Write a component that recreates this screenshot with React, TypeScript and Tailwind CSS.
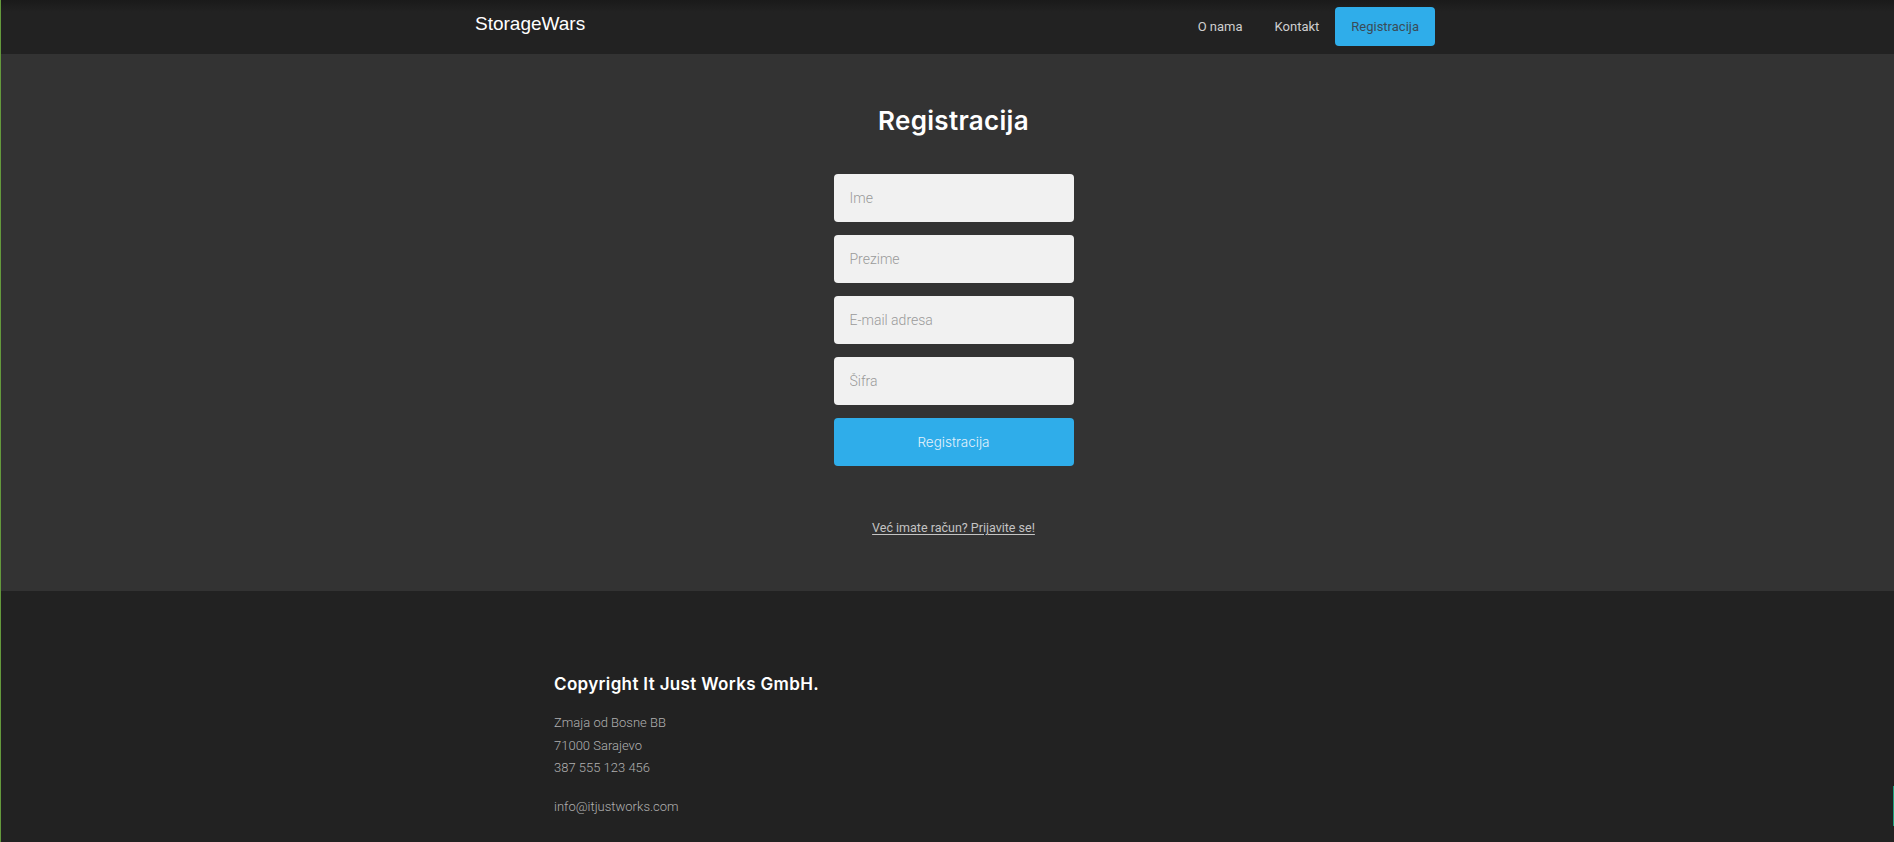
import React from "react";

const roboto = { fontFamily: "Roboto, 'Noto Sans', sans-serif" };

export default function App() {
  return (
    <div className="relative min-h-screen flex flex-col border-l border-[#64993c] bg-[#222222]">
      {/* Navbar */}
      <nav className="h-[54px] bg-[linear-gradient(to_bottom,#1a1a1a_0px,#222222_12px)]">
        <div className="w-[975px] mx-auto flex items-start justify-between">
          <a
            href="#"
            className="pl-[15px] pt-[14px] text-[19px] leading-[20px] text-white"
            style={{ fontFamily: "'Liberation Sans', Arial, sans-serif" }}
          >
            StorageWars
          </a>
          <ul className="flex items-center pt-[7px] text-[13px] font-[Roboto,sans-serif]">
            <li>
              <a href="#" className="block px-[16px] leading-[39px] text-[#cfcfcf]">
                O nama
              </a>
            </li>
            <li>
              <a href="#" className="block px-[16px] leading-[39px] text-[#cfcfcf]">
                Kontakt
              </a>
            </li>
            <li>
              <a
                href="#"
                className="block px-[16px] leading-[39px] rounded-[4px] bg-[#2fadea] text-[#3b4b57]"
              >
                Registracija
              </a>
            </li>
          </ul>
        </div>
      </nav>

      {/* Main */}
      <main className="bg-[#333333] pt-[51px] pb-[53px] pl-[12px] flex flex-col items-center">
        <h1 className="text-[26px] leading-[32px] font-semibold text-white tracking-[0.3px] font-[Inter,sans-serif]">
          Registracija
        </h1>
        <form className="mt-[37px] w-[240px] flex flex-col gap-[13px]" style={roboto}>
          {["Ime", "Prezime", "E-mail adresa", "Šifra"].map((p) => (
            <input
              key={p}
              type={p === "Šifra" ? "password" : "text"}
              placeholder={p}
              className="h-[48px] w-full rounded-[4px] bg-[#f1f1f1] px-[16px] text-[14px] font-light text-[#555] placeholder:text-[#9a9a9a] outline-none"
            />
          ))}
          <button
            type="button"
            className="h-[48px] w-full rounded-[4px] bg-[#2fadea] text-[13.5px] font-light text-[#e2f1fb] font-[Inter,sans-serif]"
          >
            Registracija
          </button>
        </form>
        <a
          href="#"
          className="mt-[52px] text-[12.5px] leading-[20px] text-[#c4c4c4] underline underline-offset-2"
          style={roboto}
        >
          Već imate račun? Prijavite se!
        </a>
      </main>

      {/* Footer */}
      <footer className="flex-1 bg-[#222222]">
        <div className="w-[975px] mx-auto pl-[94px] pt-[81px] pb-[20px]">
          <h3 className="text-[17px] leading-[24px] font-semibold tracking-[0.35px] text-white font-[Inter,sans-serif]">
            Copyright It Just Works GmbH.
          </h3>
          <div className="mt-[16px] text-[13px] leading-[22.5px] font-light text-[#b0b0b0]" style={roboto}>
            <p>Zmaja od Bosne BB</p>
            <p>71000 Sarajevo</p>
            <p>387 555 123 456</p>
            <p className="mt-[16px]">info@itjustworks.com</p>
          </div>
        </div>
      </footer>

      <div className="absolute right-0 top-[786px] h-[40px] w-px bg-[#1ca27c]" />
    </div>
  );
}
